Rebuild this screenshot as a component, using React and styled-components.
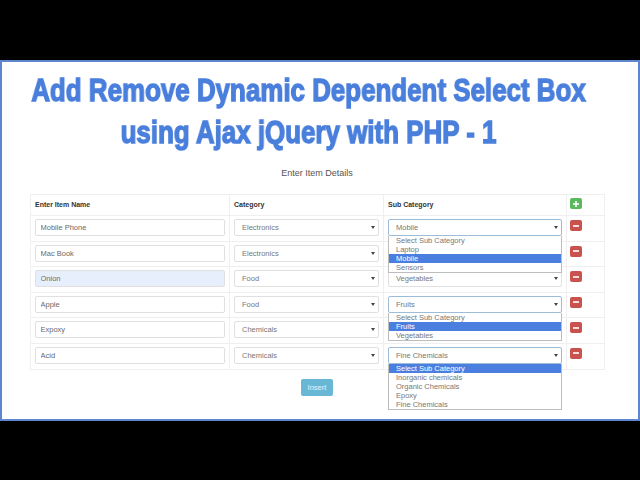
import React from "react";
import styled, { createGlobalStyle } from "styled-components";

const Global = createGlobalStyle`
  html, body { margin: 0; padding: 0; background: #000; }
  body { width: 640px; height: 480px; overflow: hidden; font-family: "Liberation Sans", Arial, sans-serif; }
`;
const Stage = styled.div`
  width: 640px; height: 480px; padding-top: 60px; box-sizing: border-box; background: #000;
`;
const Frame = styled.main`
  width: 640px; height: 361px; box-sizing: border-box; background: #fff;
  border: 2px solid #5d86cf; padding: 0 34px 0 28px;
`;
const Title = styled.h1`
  margin: 7px -47px 0 -64px; text-align: center; transform: scaleX(0.81); transform-origin: 50% 0;
  font-family: "Liberation Sans", sans-serif; white-space: nowrap; will-change: transform;
  font-weight: 700; font-size: 32px; line-height: 42px; color: #4a7fdc;
  -webkit-text-stroke: 1.4px #4a7fdc;
`;
const Subtitle = styled.div`
  margin-top: 14px; height: 27px; text-align: center; font-size: 9px; line-height: 12px; color: #555;
`;
const Table = styled.table`
  width: 574px; table-layout: fixed; border-collapse: collapse;
  td, th { border: 1px solid #efefef; box-sizing: border-box; padding: 0 4px; vertical-align: top; }
`;
const HeadCell = styled.th`
  height: 20px; text-align: left; font-size: 7px; line-height: 20px; color: #333; font-weight: 700;
`;
const Row = styled.tr` height: 25.6px; `;
const Cell = styled.td` position: relative; `;
const Name = styled.input`
  display: block; width: 100%; height: 17px; margin-top: 3px; box-sizing: border-box;
  border: 1px solid #e0e0e0; border-radius: 2px; padding: 0 4.5px;
  font: 7.5px "Liberation Sans", sans-serif; color: #6a6a6a;
  background: ${p => (p.$filled ? "#e8effc" : "#fff")};
  outline: none;
`;
const SelectBox = styled.div`
  display: flex; align-items: center; justify-content: space-between;
  height: 17px; margin-top: 3px; box-sizing: border-box; padding: 0 2px 0 7px;
  border: 1px solid ${p => (p.$open ? "#9dbcd8" : "#e0e0e0")}; border-radius: 2px;
  font-size: 7.5px; color: #777; background: #fff;
`;
const Caret = styled.span`
  width: 0; height: 0; border: 2px solid transparent; border-top: 3px solid #444; border-bottom: 0; margin-right: 1px;
`;
const Menu = styled.ul`
  position: absolute; z-index: 2; left: 4px; right: 4px; top: 20px;
  margin: 0; padding: 0; list-style: none; background: #fff;
  border: 1px solid #bdbdbd; border-top: 0;
`;
const Option = styled.li`
  height: 9px; line-height: 9px; padding-left: 7px; font-size: 7.5px;
  color: ${p => (p.$active ? "#fff" : "#777")};
  background: ${p => (p.$active ? "#4a7fe0" : "transparent")};
`;
const IconButton = styled.button`
  display: flex; align-items: center; justify-content: center; padding: 0; border: 0;
  width: 12px; height: 11px; border-radius: 2px; margin: ${p => p.$top}px 0 0 -1px;
  background: ${p => p.$bg};
`;
const Footer = styled.div` display: flex; justify-content: center; margin-top: 9px; `;
const Insert = styled.button`
  width: 32px; height: 17px; padding: 0; border: 0; border-radius: 2px; background: #68b8d5;
  color: #eef; font: 7.5px "Liberation Sans", sans-serif;
`;

const Glyph = ({ plus }) => (
  <svg width="8" height="8" viewBox="0 0 8 8">
    <path d="M1 3.2h6v1.6H1z" fill="#fff" />
    {plus && <path d="M3.2 1h1.6v6H3.2z" fill="#fff" />}
  </svg>
);

const rows = [
  { name: "Mobile Phone", cat: "Electronics", sub: "Mobile", open: true, menu: ["Select Sub Category", "Laptop", "Mobile", "Sensors"], active: 2 },
  { name: "Mac Book", cat: "Electronics", sub: "" },
  { name: "Onion", cat: "Food", sub: "Vegetables", filled: true },
  { name: "Apple", cat: "Food", sub: "Fruits", open: true, menu: ["Select Sub Category", "Fruits", "Vegetables"], active: 1 },
  { name: "Expoxy", cat: "Chemicals", sub: "" },
  { name: "Acid", cat: "Chemicals", sub: "Fine Chemicals", open: true, menu: ["Select Sub Category", "Inorganic chemicals", "Organic Chemicals", "Epoxy", "Fine Chemicals"], active: 0 },
];

export default function App() {
  return (
    <Stage>
      <Global />
      <Frame>
        <Title>Add Remove Dynamic Dependent Select Box<br />using Ajax jQuery with PHP - 1</Title>
        <Subtitle>Enter Item Details</Subtitle>
        <Table>
          <colgroup>
            <col style={{ width: 199 }} />
            <col style={{ width: 154 }} />
            <col style={{ width: 183 }} />
            <col style={{ width: 38 }} />
          </colgroup>
          <thead>
            <tr>
              <HeadCell>Enter Item Name</HeadCell>
              <HeadCell>Category</HeadCell>
              <HeadCell>Sub Category</HeadCell>
              <HeadCell><IconButton $bg="#5cb85c" $top={3}><Glyph plus /></IconButton></HeadCell>
            </tr>
          </thead>
          <tbody>
            {rows.map(r => (
              <Row key={r.name}>
                <Cell><Name readOnly value={r.name} $filled={r.filled} /></Cell>
                <Cell><SelectBox>{r.cat}<Caret /></SelectBox></Cell>
                <Cell>
                  <SelectBox $open={r.open}>{r.sub}<Caret /></SelectBox>
                  {r.menu && (
                    <Menu>
                      {r.menu.map((m, i) => <Option key={m} $active={i === r.active}>{m}</Option>)}
                    </Menu>
                  )}
                </Cell>
                <Cell><IconButton $bg="#c9514e" $top={4}><Glyph /></IconButton></Cell>
              </Row>
            ))}
          </tbody>
        </Table>
        <Footer><Insert>Insert</Insert></Footer>
      </Frame>
    </Stage>
  );
}
